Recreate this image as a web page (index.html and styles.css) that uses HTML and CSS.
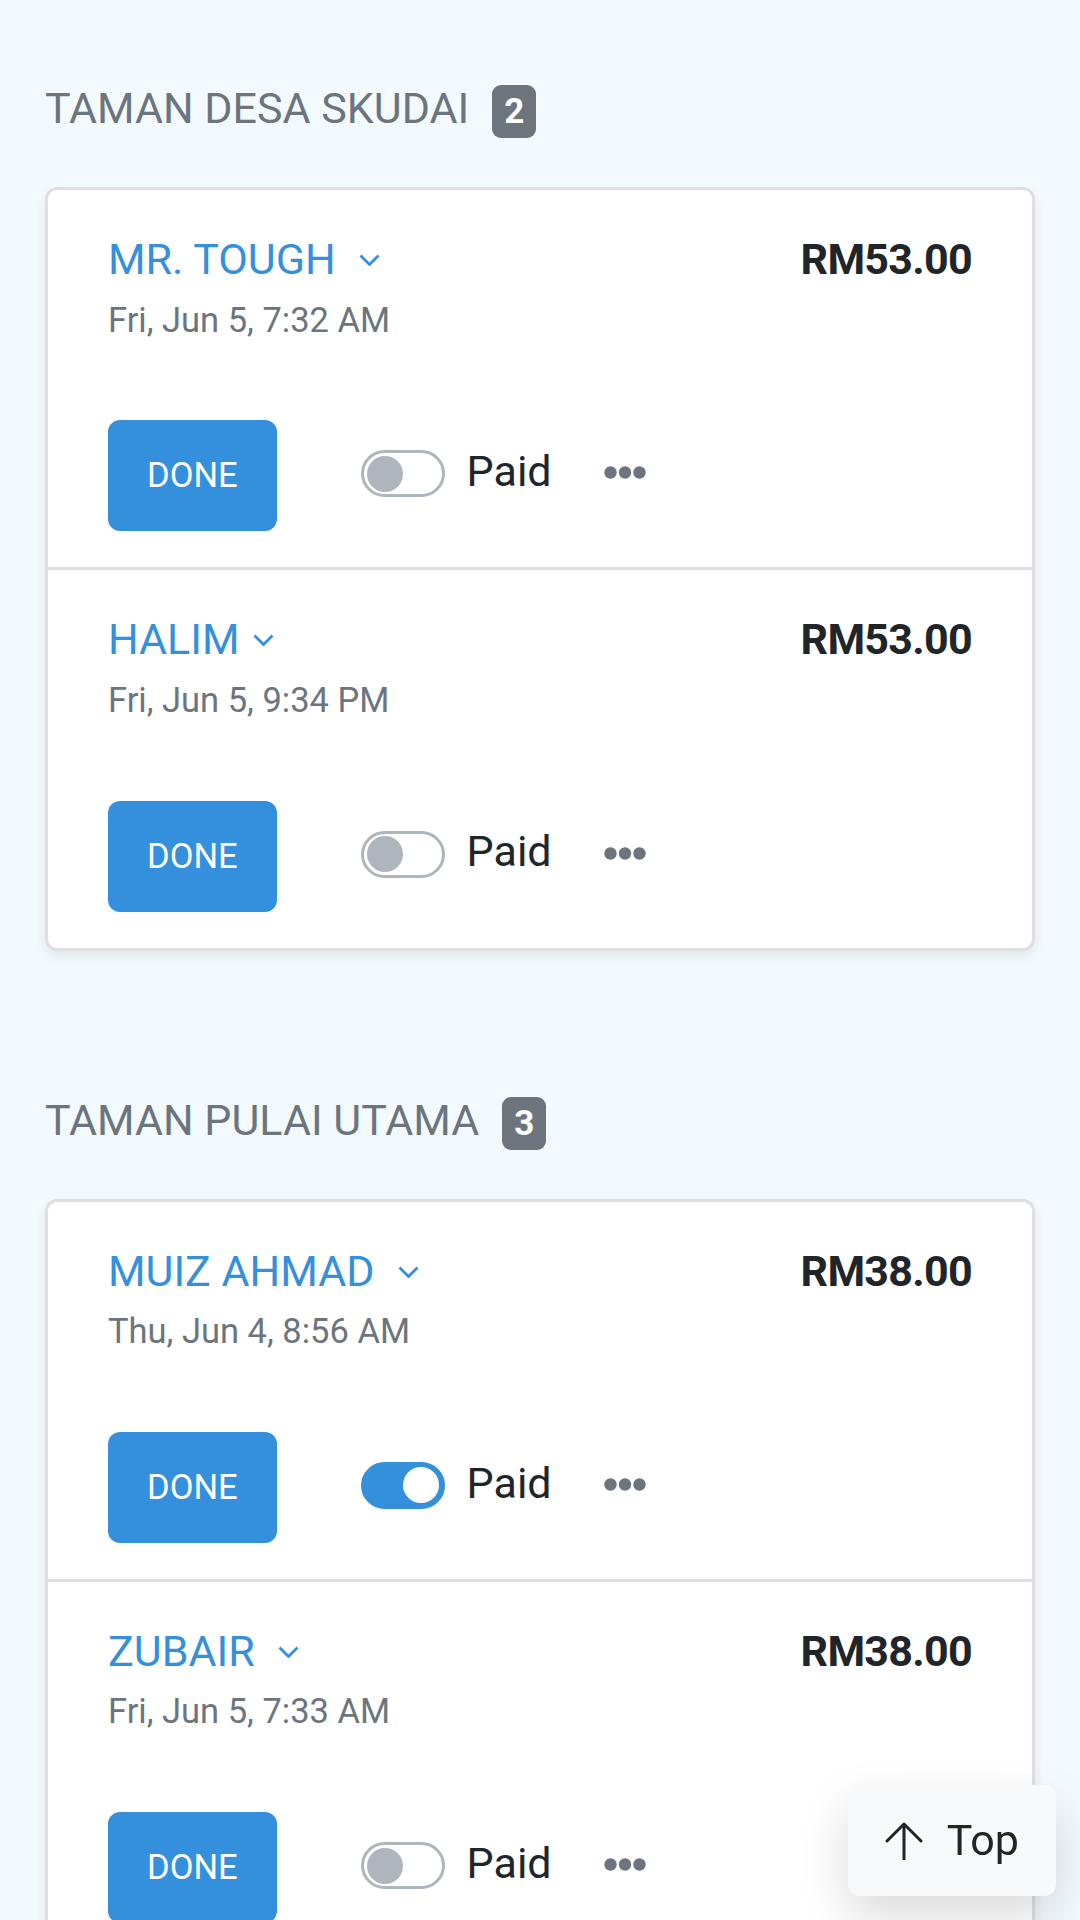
FILE: index.html
```html
<!DOCTYPE html>
<html>
<head>
<meta charset="utf-8">
<link rel="stylesheet" href="styles.css">
</head>
<body>
<main class="page">
  <section class="group">
    <h2 class="group-title"><span>TAMAN DESA SKUDAI</span><span class="badge">2</span></h2>
    <div class="card">
      <div class="item">
        <div class="item-top">
          <div class="who">
            <div class="name">MR. TOUGH <svg class="chev" viewBox="0 0 21 12"><path d="M1.5 1.5 L10.5 10.5 L19.5 1.5"/></svg></div>
            <div class="date">Fri, Jun 5, 7:32 AM</div>
          </div>
          <div class="amount">RM53.00</div>
        </div>
        <div class="actions">
          <button class="done">DONE</button>
          <label class="switch"><span class="track"><span class="knob"></span></span><span class="paid">Paid</span></label>
          <svg class="dots" viewBox="0 0 42 13"><circle cx="6.5" cy="6.5" r="6.2"/><circle cx="21" cy="6.5" r="6.2"/><circle cx="35.5" cy="6.5" r="6.2"/></svg>
        </div>
      </div>
      <div class="item">
        <div class="item-top">
          <div class="who">
            <div class="name">HALIM<svg class="chev" viewBox="0 0 21 12"><path d="M1.5 1.5 L10.5 10.5 L19.5 1.5"/></svg></div>
            <div class="date">Fri, Jun 5, 9:34 PM</div>
          </div>
          <div class="amount">RM53.00</div>
        </div>
        <div class="actions">
          <button class="done">DONE</button>
          <label class="switch"><span class="track"><span class="knob"></span></span><span class="paid">Paid</span></label>
          <svg class="dots" viewBox="0 0 42 13"><circle cx="6.5" cy="6.5" r="6.2"/><circle cx="21" cy="6.5" r="6.2"/><circle cx="35.5" cy="6.5" r="6.2"/></svg>
        </div>
      </div>
    </div>
  </section>

  <section class="group">
    <h2 class="group-title"><span>TAMAN PULAI UTAMA</span><span class="badge">3</span></h2>
    <div class="card">
      <div class="item">
        <div class="item-top">
          <div class="who">
            <div class="name">MUIZ AHMAD <svg class="chev" viewBox="0 0 21 12"><path d="M1.5 1.5 L10.5 10.5 L19.5 1.5"/></svg></div>
            <div class="date">Thu, Jun 4, 8:56 AM</div>
          </div>
          <div class="amount">RM38.00</div>
        </div>
        <div class="actions">
          <button class="done">DONE</button>
          <label class="switch on"><span class="track"><span class="knob"></span></span><span class="paid">Paid</span></label>
          <svg class="dots" viewBox="0 0 42 13"><circle cx="6.5" cy="6.5" r="6.2"/><circle cx="21" cy="6.5" r="6.2"/><circle cx="35.5" cy="6.5" r="6.2"/></svg>
        </div>
      </div>
      <div class="item">
        <div class="item-top">
          <div class="who">
            <div class="name">ZUBAIR <svg class="chev" viewBox="0 0 21 12"><path d="M1.5 1.5 L10.5 10.5 L19.5 1.5"/></svg></div>
            <div class="date">Fri, Jun 5, 7:33 AM</div>
          </div>
          <div class="amount">RM38.00</div>
        </div>
        <div class="actions">
          <button class="done">DONE</button>
          <label class="switch"><span class="track"><span class="knob"></span></span><span class="paid">Paid</span></label>
          <svg class="dots" viewBox="0 0 42 13"><circle cx="6.5" cy="6.5" r="6.2"/><circle cx="21" cy="6.5" r="6.2"/><circle cx="35.5" cy="6.5" r="6.2"/></svg>
        </div>
      </div>
    </div>
  </section>
</main>

<button class="to-top"><svg class="arrow" viewBox="0 0 38 38"><path d="M19 2 L19 37 M2 19 L19 2 L36 19"/></svg><span>Top</span></button>
</body>
</html>
```

FILE: styles.css
```css
* { box-sizing: border-box; }

html, body {
  margin: 0;
  padding: 0;
  background: #f3fafd;
}

body {
  font-family: Roboto, "Noto Sans", "Liberation Sans", sans-serif;
  color: #212529;
}

.page {
  padding: 83px 45px 0;
}

.group {
  margin-bottom: 144px;
}

.group-title {
  display: flex;
  align-items: baseline;
  gap: 23px;
  margin: 0 0 49px;
  font-size: 43px;
  font-weight: 400;
  line-height: 1.2;
  color: #6c757d;
}

.badge {
  display: inline-block;
  background: #6c757d;
  color: #fff;
  font-size: 35px;
  font-weight: 700;
  line-height: 1;
  padding: 9px 12px;
  border-radius: 9px;
}

.card {
  background: #fff;
  border: 3px solid rgba(0, 0, 0, 0.125);
  border-radius: 12px;
  box-shadow: 0 6px 12px rgba(0, 0, 0, 0.075);
}

.item {
  padding: 37px 60px 36px;
}

.item + .item {
  border-top: 3px solid rgba(0, 0, 0, 0.125);
}

.item-top {
  display: flex;
  justify-content: space-between;
  align-items: flex-start;
}

.name {
  font-size: 43px;
  line-height: 1.5;
  color: #3490dc;
}

.chev {
  width: 21px;
  height: 12px;
  margin-left: 13px;
  vertical-align: 8px;
  fill: none;
  stroke: #3490dc;
  stroke-width: 2.8;
}

.date {
  font-size: 34.5px;
  line-height: 1.5;
  color: #6c757d;
  margin-top: 3px;
}

.amount {
  font-size: 43px;
  font-weight: 700;
  letter-spacing: -0.7px;
  line-height: 64.5px;
  color: #212529;
}

.actions {
  display: flex;
  align-items: center;
  margin-top: 74px;
}

.done {
  font-family: inherit;
  font-size: 34.5px;
  line-height: 51px;
  padding: 30px 39px;
  border: 0;
  border-radius: 12px;
  background: #3490dc;
  color: #fff;
}

.switch {
  display: flex;
  align-items: center;
  margin-left: 84px;
  margin-bottom: 4px;
}

.track {
  position: relative;
  display: block;
  width: 84px;
  height: 47px;
  border: 3px solid #adb5bd;
  border-radius: 24px;
  background: #fff;
}

.knob {
  position: absolute;
  top: 2.5px;
  left: 3px;
  width: 36px;
  height: 36px;
  border-radius: 50%;
  background: #adb5bd;
}

.switch.on .track {
  background: #3490dc;
  border-color: #3490dc;
}

.switch.on .knob {
  left: auto;
  right: 3px;
  background: #fff;
}

.paid {
  font-size: 43px;
  line-height: 1.5;
  margin-left: 22px;
  margin-bottom: 5px;
  color: #212529;
}

.dots {
  width: 42px;
  height: 13px;
  margin-left: 52px;
  margin-bottom: 6px;
  fill: #6c757d;
}

.to-top {
  position: fixed;
  right: 24px;
  bottom: 24px;
  display: flex;
  align-items: center;
  gap: 24px;
  padding: 30px 37px;
  border: 0;
  border-radius: 12px;
  background: #f8f9fa;
  box-shadow: 0 20px 48px rgba(0, 0, 0, 0.15);
  font-family: inherit;
  font-size: 43px;
  line-height: 51px;
  color: #212529;
}

.arrow {
  width: 38px;
  height: 38px;
  fill: none;
  stroke: #212529;
  stroke-width: 3;
  stroke-linecap: round;
  stroke-linejoin: round;
}
```
